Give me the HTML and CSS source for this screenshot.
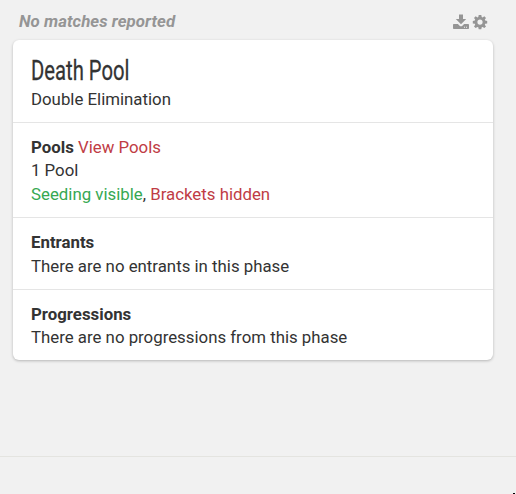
FILE: index.html
```
<!DOCTYPE html>
<html lang="en">
<head>
  <meta charset="UTF-8" />
  <meta name="viewport" content="width=device-width, initial-scale=1.0" />
  <title>Death Pool</title>
  <link rel="stylesheet" href="styles.css">
</head>
<body>
  <main>
    <header class="toolbar">
      <span class="status">No matches reported</span>
      <div class="actions">
        <svg class="icon" width="16" height="16" viewBox="0 0 16 16" aria-label="Download">
          <path d="M6 .5h4V5h3.200L8 10.200 2.800 5H6z"/>
          <path fill-rule="evenodd" d="M.8 10h4.100l1.700 1.700q1.400 1.200 2.800 0L11.100 10h4.100q.8 0 .8.8v3.400q0 .8-.8.8H.8q-.8 0-.8-.8v-3.400Q0 10 .8 10zM11 12.700v1h1v-1zm2 0v1h1v-1z"/>
        </svg>
        <svg class="icon" width="16" height="16" viewBox="0 0 16 16" aria-label="Settings">
          <path fill-rule="evenodd" d="M6.700 1h2.600l.4 2 .9.400 1.700-1.200 1.700 1.700-1.200 1.700.4.900 2 .4v2.500l-2 .4-.4.900 1.200 1.700-1.700 1.700-1.700-1.200-.9.400-.4 2H6.700l-.4-2-.9-.4-1.700 1.200L2 12.400l1.200-1.700-.4-.9-2-.4V6.900l2-.4.400-.9L2 3.900l1.700-1.700 1.700 1.200.9-.4zM8 5.500a2.600 2.600 0 1 0 0 5.200 2.600 2.600 0 0 0 0-5.200z"/>
        </svg>
      </div>
    </header>

    <div class="card">
      <section class="card-head">
        <h1>Death Pool</h1>
        <p>Double Elimination</p>
      </section>
      <section>
        <p><strong>Pools</strong> <a class="red" href="#">View Pools</a></p>
        <p>1 Pool</p>
        <p><span class="green">Seeding visible</span>, <span class="red">Brackets hidden</span></p>
      </section>
      <section>
        <h2>Entrants</h2>
        <p>There are no entrants in this phase</p>
      </section>
      <section>
        <h2>Progressions</h2>
        <p>There are no progressions from this phase</p>
      </section>
    </div>
  </main>
  <footer><span class="corner-mark"></span></footer>
</body>
</html>
```
FILE: styles.css
```
:root{
  --bg:#f1f1f1;
  --text:#333333;
  --muted:#959595;
  --green:#36a852;
  --red:#c03c45;
}
*{box-sizing:border-box}
body{margin:0;height:494px;display:flex;flex-direction:column;font-family:Roboto,"Liberation Sans",sans-serif;font-size:16.82px;line-height:23.6px;color:var(--text);background:var(--bg);overflow:hidden}
main{flex:1;padding:9px 23px 0 13px}
h1,h2,p{margin:0}
.toolbar{display:flex;justify-content:space-between;align-items:center;height:31px;padding:0 5px 6px 6px;color:var(--muted)}
.status{font-weight:700;font-style:italic;letter-spacing:.06px}
.actions{display:flex;gap:3px}
.icon{display:block;fill:currentColor}
.card{height:320px;background:#fff;border-radius:6px;box-shadow:0 1px 3px rgba(0,0,0,.25)}
.card section{padding:12.9px 18px 10.6px;border-bottom:1px solid #e5e5e5}
.card section:last-child{border-bottom:0}
.card .card-head{height:83px;padding-top:13px}
/* condensed title */
h1{width:max-content;font-size:28.5px;font-weight:400;line-height:36px;margin-bottom:-1px;transform:scaleX(.71);transform-origin:left;-webkit-text-stroke:.3px currentColor}
h2{font-size:inherit;font-weight:700}
a{text-decoration:none}
.green{color:var(--green)}
.red{color:var(--red)}
footer{position:relative;height:38px;border-top:1px solid #e4e4e0}
.corner-mark{position:absolute;right:1px;bottom:0;width:2px;height:1px;background:#000}
```
